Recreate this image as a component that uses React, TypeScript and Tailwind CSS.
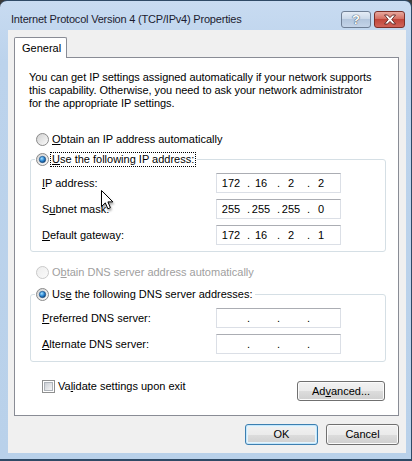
import type { ReactNode } from "react";

const BTN =
  "flex items-center justify-center rounded-[3px] border bg-[linear-gradient(#f2f2f2,#ebebeb_50%,#dddddd_50%,#cfcfcf)]";

function Radio({ checked = false, disabled = false }: { checked?: boolean; disabled?: boolean }) {
  return (
    <svg width="13" height="13" viewBox="0 0 13 13" className="shrink-0">
      <defs>
        <linearGradient id="rbOn" x1="0" y1="0" x2="1" y2="1">
          <stop offset="0" stopColor="#cfcfcf" />
          <stop offset="1" stopColor="#fdfdfd" />
        </linearGradient>
        <linearGradient id="rbOff" x1="0" y1="0" x2="1" y2="1">
          <stop offset="0" stopColor="#ececec" />
          <stop offset="1" stopColor="#fbfbfb" />
        </linearGradient>
        <radialGradient id="rbDot" cx="0.38" cy="0.35" r="0.7">
          <stop offset="0" stopColor="#a6e1ff" />
          <stop offset="0.55" stopColor="#2a86d3" />
          <stop offset="1" stopColor="#0d3b6e" />
        </radialGradient>
      </defs>
      <circle
        cx="6.5"
        cy="6.5"
        r="6"
        fill={disabled ? "url(#rbOff)" : "url(#rbOn)"}
        stroke={disabled ? "#c9c9c9" : "#8a8a8a"}
      />
      {checked && <circle cx="6.5" cy="6.5" r="3.2" fill="url(#rbDot)" stroke="#1a4a7c" strokeWidth="0.6" />}
    </svg>
  );
}

function IpField({ parts = ["", "", "", ""] }: { parts?: string[] }) {
  return (
    <div className="flex h-[20px] w-[125px] items-center border border-[#dbdfe6] border-t-[#abadb3] bg-white pl-[3px]">
      {parts.map((v, i) => (
        <div key={i} className="flex">
          <span className="w-[22px] text-center">{v}</span>
          {i < 3 && <span className="w-[8px] text-right">.</span>}
        </div>
      ))}
    </div>
  );
}

function Row({ label, parts }: { label: ReactNode; parts?: string[] }) {
  return (
    <div className="flex h-[20px] items-center">
      <span className="w-[174px]">{label}</span>
      <IpField parts={parts} />
    </div>
  );
}

export default function App() {
  return (
    <div className="relative h-[461px] w-[412px] bg-[#3a3a3a] font-['Liberation_Sans',Arial,sans-serif] text-[11px] leading-[13px] text-black">
      <div className="flex h-full flex-col rounded-t-[7px] border-t border-r border-b-2 border-[#2f4a66] bg-[linear-gradient(#c8dbf1,#bcd3ec_60px,#b9d1ea)]">
        {/* Title bar */}
        <div className="flex h-[29px] items-start pl-[11px] pr-[6px]">
          <span className="mt-[12px] tracking-[-0.2px] text-[#1c1c30]">Internet Protocol Version 4 (TCP/IPv4) Properties</span>
          <div className="ml-auto mt-[10px] flex gap-[3px]">
            <div className="flex h-[17px] w-[30px] items-center justify-center rounded-[3px] border border-[#6f7f95] bg-[linear-gradient(#e4ecf6,#c9d7e8_50%,#b3c6dd_50%,#c4d4e8)] text-[13px] font-bold leading-none text-white [text-shadow:0_0_1px_#2c3e55,0_0_1px_#2c3e55]">
              ?
            </div>
            <div className="flex h-[17px] w-[31px] items-center justify-center rounded-[3px] border border-[#7c2f28] bg-[linear-gradient(#e8a99f,#d2695c_50%,#c0463a_50%,#d0645a)]">
              <svg width="14" height="11" viewBox="0 0 14 11">
                <path
                  d="M1.5 1 H4.5 L7 3.6 L9.5 1 H12.5 L8.8 5.5 L12.5 10 H9.5 L7 7.4 L4.5 10 H1.5 L5.2 5.5 Z"
                  fill="#ffffff"
                  stroke="#5a2320"
                  strokeWidth="0.9"
                  strokeLinejoin="round"
                />
              </svg>
            </div>
          </div>
        </div>

        {/* Client area */}
        <div className="ml-[8px] mr-[5px] flex h-[423px] flex-col bg-[#f0f0f0] pl-[6px] pr-[7px]">
          {/* Tab */}
          <div className="relative z-10 -mb-px mt-[7px] flex h-[21px] w-[53px] items-center rounded-t-[2px] border border-b-0 border-[#898c95] bg-white pl-[7px]">
            General
          </div>

          {/* Panel */}
          <div className="flex h-[359px] flex-col border border-[#898c95] bg-white">
            <p className="pl-[14px] pt-[13px] tracking-[-0.05px]">
              You can get IP settings assigned automatically if your network supports
              <br />
              this capability. Otherwise, you need to ask your network administrator
              <br />
              for the appropriate IP settings.
            </p>

            <div className="mt-[23px] flex h-[13px] items-center gap-[3px] pl-[21px]">
              <Radio />
              <span>
                <u className="underline-offset-[1px]">O</u>btain an IP address automatically
              </span>
            </div>

            <fieldset className="ml-[15px] mt-[6px] w-[356px] rounded-[3px] border border-[#d5dfe5] pb-[6px] pl-[4px]">
              <legend className="pl-[1px] pr-[2px]">
                <div className="flex h-[14px] items-center gap-[2px]">
                  <Radio checked />
                  <span className="px-[1px] outline-1 outline-offset-0 outline-dotted outline-black">
                    <u className="underline-offset-[1px]">U</u>se the following IP address:
                  </span>
                </div>
              </legend>
              <div className="flex flex-col gap-[6px] pl-[7px] pt-[7px]">
                <Row label={<><u className="underline-offset-[1px]">I</u>P address:</>} parts={["172", "16", "2", "2"]} />
                <Row label={<>S<u className="underline-offset-[1px]">u</u>bnet mask:</>} parts={["255", "255", "255", "0"]} />
                <Row label={<><u className="underline-offset-[1px]">D</u>efault gateway:</>} parts={["172", "16", "2", "1"]} />
              </div>
            </fieldset>

            <div className="mt-[14px] flex h-[13px] items-center gap-[3px] pl-[21px] text-[#a0a0a0]">
              <Radio disabled />
              <span>
                O<u className="underline-offset-[1px]">b</u>tain DNS server address automatically
              </span>
            </div>

            <fieldset className="ml-[15px] mt-[8px] w-[356px] rounded-[3px] border border-[#d5dfe5] pb-[7px] pl-[4px]">
              <legend className="pl-[1px] pr-[2px]">
                <div className="flex h-[14px] items-center gap-[3px]">
                  <Radio checked />
                  <span>
                    Us<u className="underline-offset-[1px]">e</u> the following DNS server addresses:
                  </span>
                </div>
              </legend>
              <div className="flex flex-col gap-[6px] pl-[7px] pt-[7px]">
                <Row label={<><u className="underline-offset-[1px]">P</u>referred DNS server:</>} />
                <Row label={<><u className="underline-offset-[1px]">A</u>lternate DNS server:</>} />
              </div>
            </fieldset>

            <div className="mt-[18px] flex items-start justify-between pl-[27px] pr-[13px]">
              <div className="flex items-center gap-[3px]">
                <div className="h-[13px] w-[13px] border border-[#8e8f8f] bg-white p-[1px]">
                  <div className="h-full w-full border border-[#aeb3b9] bg-[linear-gradient(135deg,#cbcfd5,#f6f6f6)]" />
                </div>
                <span>
                  Va<u className="underline-offset-[1px]">l</u>idate settings upon exit
                </span>
              </div>
              <div className={`${BTN} mt-[1px] h-[20px] w-[88px] border-[#707070] shadow-[inset_0_0_0_1px_#fbfbfb]`}>
                Ad<u className="underline-offset-[1px]">v</u>anced...
              </div>
            </div>
          </div>

          {/* Dialog buttons */}
          <div className="mt-[8px] flex justify-end gap-[8px]">
            <div className={`${BTN} h-[21px] w-[73px] border-[#3c7fb1] shadow-[inset_0_0_0_1px_#c5e7fb,inset_0_0_0_2px_#e4f4fd]`}>
              OK
            </div>
            <div className={`${BTN} h-[21px] w-[73px] border-[#707070] shadow-[inset_0_0_0_1px_#fbfbfb]`}>
              Cancel
            </div>
          </div>
        </div>
      </div>

      {/* Mouse pointer */}
      <svg
        width="14"
        height="21"
        viewBox="0 0 14 21"
        className="absolute left-[101px] top-[190px] drop-shadow-[1px_2px_1px_rgba(0,0,0,0.35)]"
      >
        <path
          d="M0.5 0.5 L0.5 16.5 L4.3 12.9 L6.9 18.8 L9.4 17.7 L6.9 11.9 L11.9 11.9 Z"
          fill="#ffffff"
          stroke="#000000"
          strokeWidth="1"
          strokeLinejoin="round"
        />
      </svg>
    </div>
  );
}
